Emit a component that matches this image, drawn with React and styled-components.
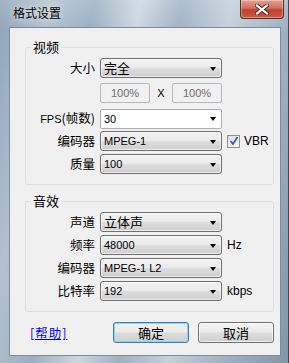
import React from 'react';
import styled, { createGlobalStyle } from 'styled-components';

const CJK = `"Noto Sans CJK SC", "Liberation Sans", sans-serif`;
const LAT = `"Liberation Sans", "Noto Sans CJK SC", sans-serif`;

const Global = createGlobalStyle`
  html, body { margin: 0; padding: 0; }
  body {
    width: 289px; height: 363px; overflow: hidden;
    font-family: ${LAT};
    background: #ffffff;
  }
`;

const Window = styled.div`
  width: 289px;
  height: 363px;
  box-sizing: border-box;
  display: flex;
  flex-direction: column;
  border-right: 1px solid #3d4a58;
  background:
    linear-gradient(180deg, rgba(255,255,255,0.18) 0px, rgba(255,255,255,0) 30px),
    linear-gradient(100deg, #8ea3b7 0%, #b2c1ce 14%, #9bafc1 27%, #ccd7e0 40%, #9fb2c3 52%, #c4d0da 66%, #a3b5c5 80%, #8297ab 100%);
`;

const TitleBar = styled.div`
  height: 27px;
  display: flex;
  align-items: flex-start;
  justify-content: space-between;
  flex-shrink: 0;
`;

const Title = styled.div`
  font-family: ${CJK};
  font-size: 12px;
  line-height: 14px;
  color: #000;
  padding: 6px 0 0 13px;
  text-shadow: 0 0 6px rgba(255,255,255,0.9);
`;

const CloseButton = styled.div`
  width: 44px;
  height: 19px;
  margin-right: 4px;
  box-sizing: border-box;
  border: 1px solid #5a2a24;
  border-top: none;
  border-radius: 0 0 4px 4px;
  background: linear-gradient(180deg, #e0a294 0%, #d0705f 45%, #c1402b 55%, #cf5a3e 100%);
  box-shadow: inset 0 0 0 1px rgba(255,255,255,0.35);
  display: flex;
  align-items: center;
  justify-content: center;
`;

const Client = styled.div`
  flex: 1;
  margin: 0 7px 7px 9px;
  box-sizing: border-box;
  background: #f0f0f0;
  border: 1px solid #7d8c9b;
  padding: 12px 0 0 15px;
  display: flex;
  flex-direction: column;
  font-family: ${CJK};
`;

const Group = styled.fieldset`
  margin: ${p => p.$mt || 0}px 0 0 0;
  width: 249px;
  box-sizing: border-box;
  border: 1px solid #d5dfe5;
  border-radius: 3px;
  padding: ${p => p.$pt}px 0 ${p => p.$pb}px 0;
  display: flex;
  flex-direction: column;
  min-width: 0;
`;

const Legend = styled.legend`
  font-family: ${CJK};
  font-size: 13px;
  line-height: 14px;
  padding: 0 2px;
  margin-left: 5px;
  color: #000;
`;

const Row = styled.div`
  display: grid;
  grid-template-columns: 69px 122px auto;
  column-gap: 5px;
  align-items: center;
  height: 20px;
  margin-top: ${p => p.$mt || 0}px;
`;

const Label = styled.div`
  font-family: ${CJK};
  font-size: 12.5px;
  line-height: 20px;
  text-align: right;
  color: #000;
  white-space: nowrap;
`;

const LatinLabel = styled.span`
  font-family: ${LAT};
  font-size: 11px;
`;

const Select = styled.div`
  height: 20px;
  box-sizing: border-box;
  border: 1px solid ${p => (p.$white ? '#abadb3' : '#707070')};
  border-radius: ${p => (p.$white ? '2px' : '3px')};
  background: ${p =>
    p.$white
      ? '#ffffff'
      : 'linear-gradient(180deg, #f2f2f2 0%, #ebebeb 48%, #dddddd 52%, #cfcfcf 100%)'};
  box-shadow: ${p => (p.$white ? 'none' : 'inset 0 0 0 1px rgba(255,255,255,0.6)')};
  display: flex;
  align-items: center;
  justify-content: space-between;
  padding: 0 5px 0 3px;
`;

const Value = styled.span`
  font-family: ${p => (p.$cjk ? CJK : LAT)};
  font-size: ${p => (p.$cjk ? '13px' : '11px')};
  color: #000;
  line-height: 18px;
  white-space: nowrap;
`;

const Arrow = styled.span`
  width: 0;
  height: 0;
  border-left: 3.5px solid transparent;
  border-right: 3.5px solid transparent;
  border-top: 4px solid #000;
  margin-top: 1px;
`;

const PercentCell = styled.div`
  display: flex;
  align-items: center;
  justify-content: space-between;
`;

const DisabledBox = styled.div`
  width: 50px;
  height: 20px;
  box-sizing: border-box;
  border: 1px solid #b5b9bd;
  border-radius: 2px;
  background: #f0f0f0;
  color: #6d6d6d;
  font-family: ${LAT};
  font-size: 11px;
  display: flex;
  align-items: center;
  justify-content: center;
`;

const Times = styled.span`
  font-family: ${LAT};
  font-size: 11px;
  color: #000;
`;

const Extra = styled.div`
  display: flex;
  align-items: center;
  gap: 4px;
  font-family: ${LAT};
  font-size: 12px;
  color: #000;
`;

const Check = styled.span`
  width: 13px;
  height: 13px;
  box-sizing: border-box;
  border: 1px solid #8e8f8f;
  background: linear-gradient(135deg, #dcdcdc 0%, #fbfbfb 100%);
  display: flex;
  align-items: center;
  justify-content: center;
`;

const ButtonRow = styled.div`
  width: 249px;
  margin-top: 10px;
  display: flex;
  align-items: center;
`;

const HelpLink = styled.a`
  font-family: ${CJK};
  font-size: 12.5px;
  letter-spacing: 1px;
  color: #0000ff;
  text-decoration: underline;
  margin-left: 5px;
  cursor: pointer;
`;

const Buttons = styled.div`
  margin-left: auto;
  display: flex;
  gap: 9px;
`;

const Button = styled.div`
  width: 76px;
  height: 21px;
  box-sizing: border-box;
  border: 1px solid ${p => (p.$default ? '#3c7fb1' : '#707070')};
  border-radius: 3px;
  background: linear-gradient(180deg, #f2f2f2 0%, #ebebeb 48%, #dddddd 52%, #cfcfcf 100%);
  box-shadow: ${p =>
    p.$default
      ? 'inset 0 0 0 1px #8fd3f5'
      : 'inset 0 0 0 1px rgba(255,255,255,0.7)'};
  display: flex;
  align-items: center;
  justify-content: center;
  font-family: ${CJK};
  font-size: 13px;
  color: #000;
`;

const Dropdown = ({ value, cjk, white }) => (
  <Select $white={white}>
    <Value $cjk={cjk}>{value}</Value>
    <Arrow />
  </Select>
);

export default function App() {
  return (
    <>
      <Global />
      <Window>
        <TitleBar>
          <Title>格式设置</Title>
          <CloseButton>
            <svg width="14" height="11" viewBox="0 0 14 11">
              <path d="M2 1.5 L12 9.5 M12 1.5 L2 9.5" stroke="#4a2a24" strokeWidth="4" strokeLinecap="square" />
              <path d="M2 1.5 L12 9.5 M12 1.5 L2 9.5" stroke="#ffffff" strokeWidth="2.2" strokeLinecap="square" />
            </svg>
          </CloseButton>
        </TitleBar>
        <Client>
          <Group $pt={4} $pb={10}>
            <Legend>视频</Legend>
            <Row>
              <Label>大小</Label>
              <Dropdown value="完全" cjk />
            </Row>
            <Row $mt={5}>
              <span />
              <PercentCell>
                <DisabledBox>100%</DisabledBox>
                <Times>X</Times>
                <DisabledBox>100%</DisabledBox>
              </PercentCell>
            </Row>
            <Row $mt={5}>
              <Label><LatinLabel>FPS</LatinLabel>(帧数)</Label>
              <Dropdown value="30" white />
            </Row>
            <Row $mt={3}>
              <Label>编码器</Label>
              <Dropdown value="MPEG-1" />
              <Extra>
                <Check>
                  <svg width="10" height="10" viewBox="0 0 10 10">
                    <path d="M1.5 5 L4 8 L8.5 1" fill="none" stroke="#3b5ea7" strokeWidth="1.8" />
                  </svg>
                </Check>
                VBR
              </Extra>
            </Row>
            <Row $mt={3}>
              <Label>质量</Label>
              <Dropdown value="100" />
            </Row>
          </Group>
          <Group $mt={9} $pt={4} $pb={10}>
            <Legend>音效</Legend>
            <Row>
              <Label>声道</Label>
              <Dropdown value="立体声" cjk />
            </Row>
            <Row $mt={3}>
              <Label>频率</Label>
              <Dropdown value="48000" />
              <Extra>Hz</Extra>
            </Row>
            <Row $mt={3}>
              <Label>编码器</Label>
              <Dropdown value="MPEG-1 L2" />
            </Row>
            <Row $mt={3}>
              <Label>比特率</Label>
              <Dropdown value="192" />
              <Extra>kbps</Extra>
            </Row>
          </Group>
          <ButtonRow>
            <HelpLink>[帮助]</HelpLink>
            <Buttons>
              <Button $default>确定</Button>
              <Button>取消</Button>
            </Buttons>
          </ButtonRow>
        </Client>
      </Window>
    </>
  );
}
